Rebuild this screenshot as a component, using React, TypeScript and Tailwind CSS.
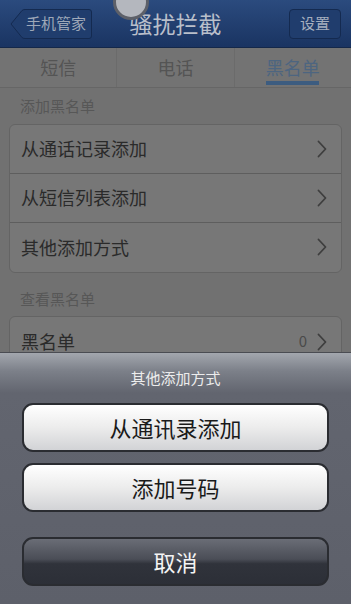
import React from 'react';

const font = { fontFamily: '"Noto Sans CJK SC", "Noto Sans", sans-serif' };

function Chevron() {
  return (
    <svg width="10" height="18" viewBox="0 0 10 18" className="shrink-0">
      <path d="M1.5 1.5 L8.5 9 L1.5 16.5" fill="none" stroke="#3e3e3e" strokeWidth="1.8" strokeLinecap="round" strokeLinejoin="round" />
    </svg>
  );
}

function Row({ label, value, last }: { label: string; value?: string; last?: boolean }) {
  return (
    <div className={`flex items-center h-[49px] pl-[11px] pr-[14px] ${last ? '' : 'border-b border-[#5e5e5e]'}`}>
      <span className="flex-1 text-[18px] text-[#2a2a2a]">{label}</span>
      {value && <span className="text-[15px] text-[#4a4a4a] mr-[10px]">{value}</span>}
      <Chevron />
    </div>
  );
}

export default function App() {
  return (
    <div className="relative w-[351px] h-[604px] overflow-hidden bg-[#717171]" style={font}>
      {/* Nav bar */}
      <div className="relative h-[48px] flex items-center justify-between px-[10px] bg-gradient-to-b from-[#2b4b7e] to-[#1a3462] border-b border-[#14284a]">
        <div className="relative w-[82px] h-[30px] flex items-center justify-center pl-[10px]">
          <svg className="absolute inset-0" width="82" height="30" viewBox="0 0 82 30">
            <path d="M1 15 L12 1.5 Q13 0.5 15 0.5 L79 0.5 Q81.5 0.5 81.5 3 L81.5 27 Q81.5 29.5 79 29.5 L15 29.5 Q13 29.5 12 28.5 Z" fill="#203d6d" stroke="#142a50" strokeWidth="1" />
          </svg>
          <span className="relative text-[15px] text-[#9ea8b8]">手机管家</span>
        </div>
        <span className="absolute left-0 right-0 text-center text-[23px] text-[#b9bfca] pointer-events-none">骚扰拦截</span>
        <div className="w-[52px] h-[30px] flex items-center justify-center rounded-[4px] bg-[#203d6d] border border-[#142a50] text-[15px] text-[#a6afbe]">
          设置
        </div>
      </div>

      {/* Floating circle */}
      <div className="absolute left-[113px] top-[-16px] w-[36px] h-[36px] rounded-full bg-[#b4b7be] border-[3px] border-[#5d6069]" />

      {/* Tabs */}
      <div className="flex h-[40px] bg-[#737373] border-b border-[#666]">
        <div className="flex-1 flex items-center justify-center text-[18px] text-[#545454] border-r border-[#6b6b6b]">短信</div>
        <div className="flex-1 flex items-center justify-center text-[18px] text-[#545454] border-r border-[#6b6b6b]">电话</div>
        <div className="flex-1 flex flex-col items-center justify-center">
          <span className="text-[18px] text-[#4d6580] leading-[24px] mt-[4px]">黑名单</span>
          <div className="w-[53px] h-[4px] bg-[#3c5c80] mt-[2px]" />
        </div>
      </div>

      {/* Content */}
      <div className="px-[9px]">
        <div className="text-[15px] text-[#575757] pl-[11px] pt-[7px] pb-[6px]">添加黑名单</div>
        <div className="rounded-[6px] bg-[#777777] border border-[#646464]">
          <Row label="从通话记录添加" />
          <Row label="从短信列表添加" />
          <Row label="其他添加方式" last />
        </div>
        <div className="text-[15px] text-[#575757] pl-[11px] pt-[15px] pb-[6px]">查看黑名单</div>
        <div className="rounded-[6px] bg-[#777777] border border-[#646464]">
          <Row label="黑名单" value="0" last />
        </div>
      </div>

      {/* Action sheet */}
      <div className="absolute left-0 right-0 bottom-0 top-[352px] border-t border-[#4a4c52] bg-[linear-gradient(to_bottom,#a3a7ae_0px,#7c8089_18px,#62656f_40px,#5d606a_100%)] px-[22px]">
        <div className="text-center text-[15px] text-[#ececec] pt-[14px] h-[50px]">其他添加方式</div>
        <div className="h-[49px] rounded-[11px] border-[2px] border-[#2a2c31] bg-gradient-to-b from-[#ffffff] via-[#ececec] to-[#d2d3d6] flex items-center justify-center text-[22px] text-[#1a1a1a]">
          从通讯录添加
        </div>
        <div className="h-[49px] mt-[11px] rounded-[11px] border-[2px] border-[#2a2c31] bg-gradient-to-b from-[#ffffff] via-[#ececec] to-[#d2d3d6] flex items-center justify-center text-[22px] text-[#1a1a1a]">
          添加号码
        </div>
        <div className="h-[49px] mt-[25px] rounded-[11px] border-[2px] border-[#2a2c31] bg-[linear-gradient(to_bottom,#6a6d76_0%,#4a4d56_45%,#30333b_55%,#2c2f37_100%)] flex items-center justify-center text-[22px] text-[#f4f4f4]">
          取消
        </div>
      </div>
    </div>
  );
}
